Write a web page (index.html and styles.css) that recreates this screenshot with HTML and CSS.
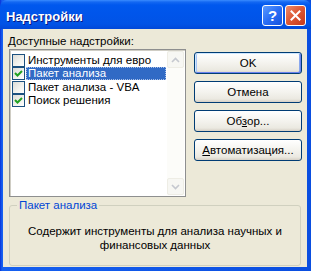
FILE: index.html
```html
<!DOCTYPE html>
<html lang="ru">
<head>
  <meta charset="UTF-8">
  <title>Надстройки</title>
  <link rel="stylesheet" href="styles.css">
</head>
<body>
  <div class="window">
    <div class="titlebar">
      <span class="title">Надстройки</span>
      <div class="caption-buttons">
        <span class="cap-btn help">?</span>
        <span class="cap-btn close">
          <svg width="11" height="11" viewBox="0 0 11 11">
            <path d="M1.5 1.5 L9.5 9.5 M9.5 1.5 L1.5 9.5" stroke="#fff" stroke-width="2" stroke-linecap="square"/>
          </svg>
        </span>
      </div>
    </div>

    <div class="client">
      <div class="top">
        <div class="left">
          <div class="label">Доступные надстройки:</div>
          <div class="listbox">
            <ul class="items">
              <li class="item">
                <span class="check"></span>
                <span class="text">Инструменты для евро</span>
              </li>
              <li class="item selected">
                <span class="check checked">
                  <svg width="11" height="11" viewBox="0 0 11 11"><path d="M2 5 L4.5 7.5 L9 3" stroke="#21a121" stroke-width="2" fill="none"/></svg>
                </span>
                <span class="text">Пакет анализа</span>
              </li>
              <li class="item">
                <span class="check"></span>
                <span class="text">Пакет анализа - VBA</span>
              </li>
              <li class="item">
                <span class="check checked">
                  <svg width="11" height="11" viewBox="0 0 11 11"><path d="M2 5 L4.5 7.5 L9 3" stroke="#21a121" stroke-width="2" fill="none"/></svg>
                </span>
                <span class="text">Поиск решения</span>
              </li>
            </ul>
            <div class="scrollbar">
              <span class="arrow">
                <svg width="9" height="6" viewBox="0 0 9 6"><path d="M1 5 L4.5 1.5 L8 5" stroke="#c5c8cf" stroke-width="1.6" fill="none"/></svg>
              </span>
              <span class="track"></span>
              <span class="arrow">
                <svg width="9" height="6" viewBox="0 0 9 6"><path d="M1 1 L4.5 4.5 L8 1" stroke="#c5c8cf" stroke-width="1.6" fill="none"/></svg>
              </span>
            </div>
          </div>
        </div>

        <div class="buttons">
          <button class="btn default">OK</button>
          <button class="btn">Отмена</button>
          <button class="btn">Об<u>з</u>ор...</button>
          <button class="btn"><u>А</u>втоматизация...</button>
        </div>
      </div>

      <fieldset class="group">
        <legend>Пакет анализа</legend>
        <p class="desc">Содержит инструменты для анализа научных и финансовых данных</p>
      </fieldset>
    </div>
  </div>
</body>
</html>
```

FILE: styles.css
```css
body {
  margin: 0;
  font-family: "Liberation Sans", Arial, sans-serif;
  font-size: 11.5px;
  color: #000;
}

.window {
  width: 311px;
  height: 271px;
  background: linear-gradient(90deg, #0831d9 0px, #1660f0 2px, #0a4ee0 100%);
  display: flex;
  flex-direction: column;
}

/* title bar */
.titlebar {
  height: 29px;
  display: flex;
  justify-content: space-between;
  background: linear-gradient(180deg, #3a8cff 0px, #1468f2 2px, #0058ee 5px, #0055ea 15px, #0153e6 24px, #0148d8 29px);
  border-radius: 7px 7px 0 0;
}

.title {
  padding: 9px 0 0 6px;
  line-height: 15px;
  font-size: 13px;
  font-weight: bold;
  color: #fff;
  text-shadow: 1px 1px 0 #0a1883;
}

.caption-buttons {
  display: flex;
  gap: 2px;
  padding: 5px 5px 0 0;
}

.cap-btn {
  width: 19px;
  height: 19px;
  border: 1px solid #fff;
  border-radius: 3px;
  display: flex;
  align-items: center;
  justify-content: center;
}

.help {
  background: linear-gradient(135deg, #5b9bff 0%, #2a6ef5 50%, #1552dd 100%);
  color: #fff;
  font-weight: bold;
  font-size: 15px;
}

.close {
  background: linear-gradient(135deg, #eb8c6c 0%, #de5a36 45%, #c6381b 100%);
}

/* client area */
.client {
  flex: 1;
  margin: 0 4px 4px 3px;
  background: #ece9d8;
  display: flex;
  flex-direction: column;
}

.top {
  display: flex;
}

.left {
  margin-left: 6px;
  width: 177px;
}

.label {
  margin: 6px 0 1px -1px;
  line-height: 13px;
}

.listbox {
  height: 146px;
  border: 1px solid #8e8f8f;
  box-shadow: inset 1px 1px 0 #cfcdc4;
  padding: 1px 1px 1px 1px;
  background: #fff;
  display: flex;
  box-sizing: border-box;
  height: 148px;
}

.items {
  list-style: none;
  margin: 0;
  padding: 2.5px 0 0 1px;
  flex: 1;
}

.item {
  height: 13.5px;
  display: flex;
  align-items: center;
}

.check {
  width: 11px;
  height: 11px;
  border: 1px solid #1c5180;
  background: linear-gradient(135deg, #dcdcd7 0%, #f3f3ef 60%, #fff 100%);
  display: flex;
  align-items: center;
  justify-content: center;
  flex: none;
}

.text {
  flex: 1;
  margin: 0 1px 0 1px;
  padding-left: 2px;
  height: 13px;
  line-height: 13px;
  white-space: nowrap;
}

.selected .text {
  background: #316ac5;
  color: #fff;
  outline: 1px dotted #a9c0e8;
  outline-offset: -1px;
}

.scrollbar {
  width: 17px;
  display: flex;
  flex-direction: column;
  background: #fcfcf9;
}

.arrow {
  height: 15px;
  border: 1px solid #eeede5;
  border-radius: 2px;
  background: #f7f7f3;
  display: flex;
  align-items: center;
  justify-content: center;
}

.track {
  flex: 1;
}

/* buttons */
.buttons {
  margin: 23px 0 0 8px;
  display: flex;
  flex-direction: column;
  gap: 7px;
}

.btn {
  width: 108px;
  height: 22px;
  padding: 0;
  border: 1px solid #003c74;
  border-radius: 3px;
  background: linear-gradient(180deg, #ffffff 0%, #f4f3ee 50%, #ebe9e1 85%, #d6d0c5 100%);
  font-family: "Liberation Sans", Arial, sans-serif;
  font-size: 11.5px;
  color: #000;
}

.btn.default {
  box-shadow: inset 1px 1px 0 #cee7ff, inset -1px -1px 0 #6982ee, inset 2px 0 0 #a8c5f5, inset -2px 0 0 #8aa8ee;
}

/* group box */
.group {
  margin: 2px 6px 0 6px;
  padding: 12px 6px 13px;
  border: 1px solid #d0d0bf;
  border-radius: 3px;
  min-width: 0;
}

.group legend {
  padding: 0 2px;
  margin-left: 1px;
  color: #0046d5;
  line-height: 13px;
}

.desc {
  margin: 0;
  line-height: 14px;
  text-align: center;
}
```
